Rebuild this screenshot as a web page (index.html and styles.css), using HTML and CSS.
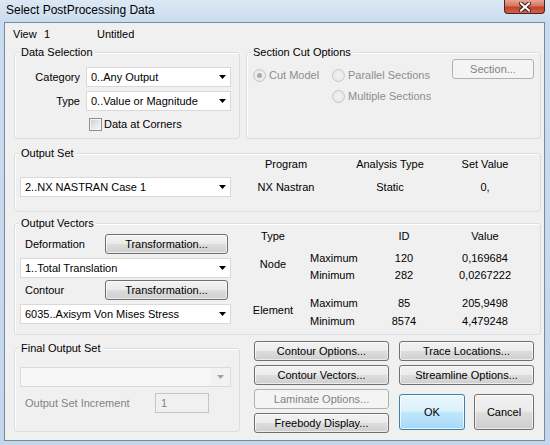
FILE: index.html
```html
<!DOCTYPE html>
<html>
<head>
<meta charset="utf-8">
<link rel="stylesheet" href="styles.css">
</head>
<body>
<div class="window">
  <div class="titlebar">
    <div class="title">Select PostProcessing Data</div>
    <div class="close">
      <svg width="12" height="10" viewBox="0 0 12 10"><path d="M2 1.5 L10 8.5 M10 1.5 L2 8.5" stroke="#3a1c16" stroke-width="4" stroke-linecap="square"/><path d="M2 1.5 L10 8.5 M10 1.5 L2 8.5" stroke="#fff" stroke-width="2" stroke-linecap="square"/></svg>
    </div>
  </div>
  <div class="client">
    <div class="viewrow"><span class="v1">View</span><span class="v2">1</span><span>Untitled</span></div>

    <div class="row1">
      <div class="group ds">
        <div class="legend">Data Selection</div>
        <div class="ds-row"><span class="ds-label">Category</span><div class="combo w145"><span>0..Any Output</span><svg class="arrow" width="7" height="4" viewBox="0 0 7 4"><path d="M0 0H7L3.5 4Z" fill="#000"/></svg></div></div>
        <div class="ds-row gap4"><span class="ds-label">Type</span><div class="combo w145"><span>0..Value or Magnitude</span><svg class="arrow" width="7" height="4" viewBox="0 0 7 4"><path d="M0 0H7L3.5 4Z" fill="#000"/></svg></div></div>
        <div class="check-row"><span class="checkbox"></span><span>Data at Corners</span></div>
      </div>
      <div class="group sc">
        <div class="legend">Section Cut Options</div>
        <div class="sc-col1"><div class="radio-item"><span class="radio checked"></span><span>Cut Model</span></div></div>
        <div class="sc-col2">
          <div class="radio-item"><span class="radio"></span><span>Parallel Sections</span></div>
          <div class="radio-item"><span class="radio"></span><span>Multiple Sections</span></div>
        </div>
        <div class="btn disabled section-btn">Section...</div>
      </div>
    </div>

    <div class="group os">
      <div class="legend">Output Set</div>
      <div class="combo w211 os-combo"><span>2..NX NASTRAN Case 1</span><svg class="arrow" width="7" height="4" viewBox="0 0 7 4"><path d="M0 0H7L3.5 4Z" fill="#000"/></svg></div>
      <div class="os-grid">
        <span>Program</span><span>Analysis Type</span><span>Set Value</span>
        <span>NX Nastran</span><span>Static</span><span>0,</span>
      </div>
    </div>

    <div class="group ov">
      <div class="legend">Output Vectors</div>
      <div class="ov-left">
        <div class="ov-row"><span class="ov-label">Deformation</span><div class="btn tbtn">Transformation...</div></div>
        <div class="combo w211 mt4"><span>1..Total Translation</span><svg class="arrow" width="7" height="4" viewBox="0 0 7 4"><path d="M0 0H7L3.5 4Z" fill="#000"/></svg></div>
        <div class="ov-row mt2"><span class="ov-label">Contour</span><div class="btn tbtn">Transformation...</div></div>
        <div class="combo w211 mt4"><span>6035..Axisym Von Mises Stress</span><svg class="arrow" width="7" height="4" viewBox="0 0 7 4"><path d="M0 0H7L3.5 4Z" fill="#000"/></svg></div>
      </div>
      <div class="ov-grid">
        <span class="c-type">Type</span><span></span><span class="c-mid">ID</span><span class="c-mid">Value</span>
        <span class="c-type node">Node</span><span class="c-lbl">Maximum</span><span class="c-mid">120</span><span class="c-mid">0,169684</span>
        <span class="c-lbl">Minimum</span><span class="c-mid">282</span><span class="c-mid">0,0267222</span>
        <span class="c-type elem">Element</span><span class="c-lbl">Maximum</span><span class="c-mid">85</span><span class="c-mid">205,9498</span>
        <span class="c-lbl">Minimum</span><span class="c-mid">8574</span><span class="c-mid">4,479248</span>
      </div>
    </div>

    <div class="bottom">
      <div class="group fos">
        <div class="legend">Final Output Set</div>
        <div class="combo w211 dis-combo"><span></span><span class="dis-arrow-box"><svg class="arrow" width="7" height="4" viewBox="0 0 7 4"><path d="M0 0H7L3.5 4Z" fill="#a3a3a3"/></svg></span></div>
        <div class="inc-row"><span class="inc-label">Output Set Increment</span><div class="inc-input">1</div></div>
      </div>
      <div class="btn-area">
        <div class="btn-col">
          <div class="btn">Contour Options...</div>
          <div class="btn">Contour Vectors...</div>
          <div class="btn disabled">Laminate Options...</div>
          <div class="btn">Freebody Display...</div>
        </div>
        <div class="btn-col">
          <div class="btn">Trace Locations...</div>
          <div class="btn">Streamline Options...</div>
          <div class="okrow">
            <div class="btn big ok">OK</div>
            <div class="btn big cancel">Cancel</div>
          </div>
        </div>
      </div>
    </div>
  </div>
</div>
</body>
</html>
```
FILE: styles.css
```css
html, body {
  margin: 0;
  padding: 0;
}
body {
  font-family: "Liberation Sans", Arial, sans-serif;
  font-size: 11px;
  color: #000;
  line-height: 13px;
}
.window {
  width: 550px;
  height: 445px;
  background: linear-gradient(to bottom, #dbe8f5 0px, #cadcef 22px, #c3d7ec 100%);
  display: flex;
  flex-direction: column;
}
.titlebar {
  height: 22px;
  display: flex;
  align-items: flex-start;
  flex: none;
}
.title {
  font-size: 12px;
  line-height: 16px;
  margin: 2px 0 0 6px;
  color: #000;
}
.close {
  margin-left: auto;
  margin-right: 5px;
  width: 41px;
  height: 14px;
  box-sizing: border-box;
  border: 1px solid #4a231b;
  border-top: none;
  border-radius: 0 0 4px 4px;
  background: linear-gradient(to bottom, #e5a493 0%, #d5775f 45%, #c2432a 55%, #d2614a 100%);
  display: flex;
  align-items: center;
  justify-content: center;
}
.client {
  margin-left: 4px;
  width: 541px;
  height: 419px;
  box-sizing: border-box;
  border: 1px solid #7b8a9a;
  background: #f0f0f0;
  padding: 0 3px 0 9px;
  display: flex;
  flex-direction: column;
}
.viewrow {
  margin: 5px 0 0 -1px;
  height: 13px;
  display: flex;
}
.v1 { width: 31px; }
.v2 { width: 53px; }

.group {
  position: relative;
  box-sizing: border-box;
  border: 1px solid #d5dfe5;
  border-radius: 3px;
  box-shadow: inset 1px 1px 0 #fff;
}
.legend {
  position: absolute;
  top: -7px;
  left: 4px;
  padding: 0 2px;
  background: #f0f0f0;
  line-height: 13px;
  white-space: nowrap;
}
.row1 {
  margin-top: 11px;
  display: flex;
  gap: 6px;
}
.ds {
  width: 226px;
  height: 87px;
  padding-top: 14px;
}
.ds-row {
  display: flex;
  align-items: center;
  height: 20px;
}
.gap4 { margin-top: 4px; }
.ds-label {
  width: 65px;
  text-align: right;
}
.combo {
  box-sizing: border-box;
  height: 20px;
  border: 1px solid #d9d9d9;
  background: #fff;
  display: flex;
  align-items: center;
  padding-left: 4px;
  white-space: nowrap;
}
.ds .combo { margin-left: 6px; }
.w145 { width: 145px; }
.w211 { width: 211px; }
.arrow {
  margin-left: auto;
  margin-right: 4px;
  flex: none;
}
.check-row {
  margin-top: 7px;
  padding-left: 74px;
  display: flex;
  align-items: center;
  height: 13px;
}
.checkbox {
  width: 13px;
  height: 13px;
  box-sizing: border-box;
  border: 1px solid #8e8f8f;
  background: linear-gradient(135deg, #c9cdd2 0%, #e9eaeb 60%, #f6f6f6 100%);
  box-shadow: inset 0 0 0 1px #f4f4f4;
  margin-right: 2px;
}
.sc {
  flex: 1;
  height: 87px;
  display: flex;
  align-items: flex-start;
  color: #8d8d8d;
}
.sc .legend { color: #000; }
.sc-col1 {
  margin: 16px 0 0 6px;
  width: 79px;
}
.sc-col2 {
  margin-top: 16px;
  display: flex;
  flex-direction: column;
  gap: 8px;
}
.radio-item {
  display: flex;
  align-items: center;
  height: 13px;
  gap: 3px;
  white-space: nowrap;
}
.radio {
  width: 13px;
  height: 13px;
  box-sizing: border-box;
  border-radius: 50%;
  border: 1px solid #c6c6c6;
  background: radial-gradient(circle at 50% 50%, #f2f2f2 0%, #e4e4e4 100%);
  position: relative;
}
.radio.checked::after {
  content: "";
  position: absolute;
  left: 3px;
  top: 3px;
  width: 5px;
  height: 5px;
  border-radius: 50%;
  background: #a9a9a9;
}
.section-btn {
  margin: 6px 6px 0 auto;
  width: 82px;
  height: 20px;
}

.btn {
  box-sizing: border-box;
  height: 20px;
  border: 1px solid #707070;
  border-radius: 3px;
  background: linear-gradient(to bottom, #f2f2f2 0%, #ebebeb 48%, #dddddd 52%, #cfcfcf 100%);
  box-shadow: inset 0 0 0 1px rgba(255,255,255,0.6);
  display: flex;
  align-items: center;
  justify-content: center;
  white-space: nowrap;
  color: #000;
}
.btn.disabled {
  border-color: #adb2b5;
  background: #f4f4f4;
  box-shadow: none;
  color: #838383;
}

.os {
  margin-top: 14px;
  height: 59px;
  display: flex;
  align-items: flex-start;
}
.os-combo { margin: 23px 0 0 5px; }
.os-grid {
  margin: 4px 0 0 9px;
  display: grid;
  grid-template-columns: 92px 116px 74px;
  row-gap: 10px;
  text-align: center;
  white-space: nowrap;
}

.ov {
  margin-top: 11px;
  height: 112px;
  display: flex;
  align-items: flex-start;
}
.ov-left {
  margin: 10px 0 0 5px;
  width: 211px;
  display: flex;
  flex-direction: column;
}
.ov-row {
  display: flex;
  align-items: center;
  height: 20px;
}
.ov-label { padding-left: 5px; }
.tbtn {
  margin-left: auto;
  margin-right: 3px;
  width: 123px;
}
.mt4 { margin-top: 4px; }
.mt2 { margin-top: 2px; }
.ov-grid {
  margin: 6px 0 0 15px;
  display: grid;
  grid-template-columns: 54px 64px 80px 82px;
  grid-template-rows: 22px 17px 28px 18px 13px;
  white-space: nowrap;
}
.c-type { text-align: center; }
.c-mid { text-align: center; }
.c-lbl { padding-left: 10px; }
.node {
  grid-row: 2 / span 2;
  grid-column: 1;
  margin-top: 6px;
}
.elem {
  grid-row: 4 / span 2;
  grid-column: 1;
  margin-top: 7px;
}

.bottom {
  margin-top: 6px;
  display: flex;
  align-items: flex-start;
}
.fos {
  margin-top: 7px;
  width: 226px;
  height: 84px;
  display: flex;
  flex-direction: column;
}
.dis-combo {
  margin: 18px 0 0 5px;
  background: #f7f7f7;
  border-color: #dadada;
  padding-left: 0;
}
.dis-arrow-box {
  margin-left: auto;
  width: 20px;
  height: 18px;
  display: flex;
  align-items: center;
  justify-content: center;
  background: #f2f2f2;
}
.dis-arrow-box .arrow { margin: 0; }
.inc-row {
  margin-top: 6px;
  display: flex;
  align-items: center;
  height: 20px;
  color: #838383;
}
.inc-label {
  width: 130px;
  padding-left: 10px;
  white-space: nowrap;
}
.inc-input {
  width: 54px;
  height: 20px;
  box-sizing: border-box;
  border: 1px solid #c5c5c5;
  background: #f0f0f0;
  padding-left: 5px;
  display: flex;
  align-items: center;
}
.btn-area {
  margin-left: 14px;
  display: flex;
  gap: 10px;
}
.btn-col {
  width: 135px;
  display: flex;
  flex-direction: column;
  gap: 4px;
}
.okrow {
  margin-top: 5px;
  display: flex;
  gap: 9px;
}
.btn.big { height: 36px; }
.ok {
  width: 66px;
  border-color: #3c7fb1;
  background: linear-gradient(to bottom, #eaf6fd 0%, #d9f0fc 48%, #bee6fd 52%, #a7d9f5 100%);
  box-shadow: inset 0 0 0 1px rgba(255,255,255,0.7);
}
.cancel { width: 60px; }
```
